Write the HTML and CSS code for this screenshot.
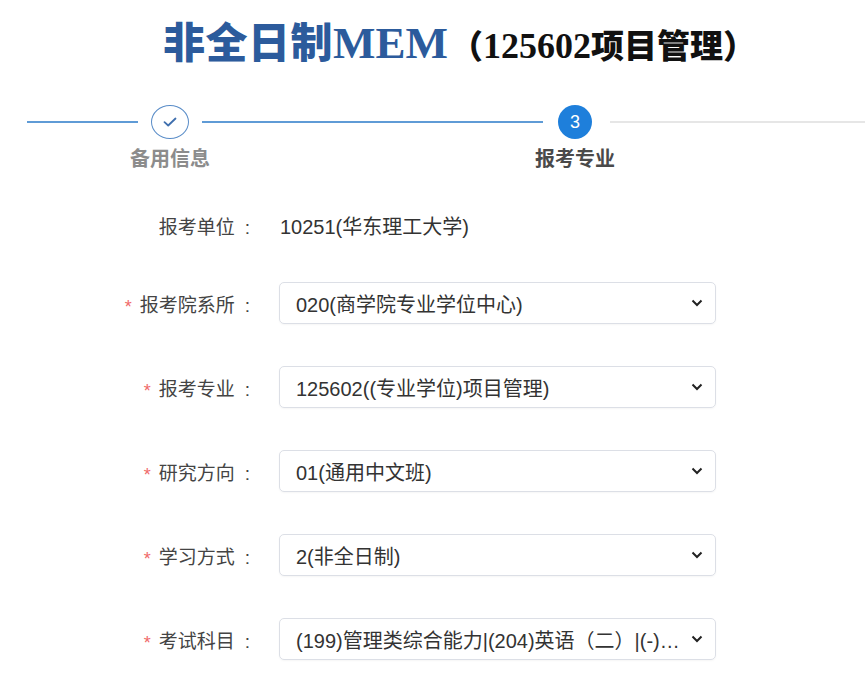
FILE: index.html
```html
<!DOCTYPE html>
<html lang="zh-CN">
<head>
<meta charset="utf-8">
<title>非全日制MEM</title>
<link rel="stylesheet" href="styles.css">
</head>
<body>
<div class="page">
  <h1 class="title"><span class="title-main">非全日制<span class="latin">MEM</span></span><span class="title-sub">（<span class="latin">125602</span>项目管理）</span></h1>

  <div class="steps">
    <div class="line line-first done"></div>
    <div class="step step-done">
      <div class="circle circle-done">
        <svg width="14" height="10" viewBox="0 0 14 10"><path d="M1.5 5.2 L5.2 8.5 L12.5 1.5" fill="none" stroke="#3f6fae" stroke-width="1.8" stroke-linecap="round" stroke-linejoin="round"/></svg>
      </div>
      <div class="step-label">备用信息</div>
    </div>
    <div class="line line-mid done"></div>
    <div class="step step-current">
      <div class="circle circle-active">3</div>
      <div class="step-label label-active">报考专业</div>
    </div>
    <div class="line line-last"></div>
  </div>

  <div class="form">
    <div class="row row-static">
      <div class="label">报考单位<span class="colon">:</span></div>
      <div class="value">10251(华东理工大学)</div>
    </div>
    <div class="row">
      <div class="label"><span class="req">*</span>报考院系所<span class="colon">:</span></div>
      <div class="select"><span class="select-text">020(商学院专业学位中心)</span><svg class="chev" width="12" height="8" viewBox="0 0 12 8"><path d="M1.5 1.5 L6 6 L10.5 1.5" fill="none" stroke="#222" stroke-width="2"/></svg></div>
    </div>
    <div class="row">
      <div class="label"><span class="req">*</span>报考专业<span class="colon">:</span></div>
      <div class="select"><span class="select-text">125602((专业学位)项目管理)</span><svg class="chev" width="12" height="8" viewBox="0 0 12 8"><path d="M1.5 1.5 L6 6 L10.5 1.5" fill="none" stroke="#222" stroke-width="2"/></svg></div>
    </div>
    <div class="row">
      <div class="label"><span class="req">*</span>研究方向<span class="colon">:</span></div>
      <div class="select"><span class="select-text">01(通用中文班)</span><svg class="chev" width="12" height="8" viewBox="0 0 12 8"><path d="M1.5 1.5 L6 6 L10.5 1.5" fill="none" stroke="#222" stroke-width="2"/></svg></div>
    </div>
    <div class="row">
      <div class="label"><span class="req">*</span>学习方式<span class="colon">:</span></div>
      <div class="select"><span class="select-text">2(非全日制)</span><svg class="chev" width="12" height="8" viewBox="0 0 12 8"><path d="M1.5 1.5 L6 6 L10.5 1.5" fill="none" stroke="#222" stroke-width="2"/></svg></div>
    </div>
    <div class="row">
      <div class="label"><span class="req">*</span>考试科目<span class="colon">:</span></div>
      <div class="select"><span class="select-text">(199)管理类综合能力|(204)英语（二）|(-)…</span><svg class="chev" width="12" height="8" viewBox="0 0 12 8"><path d="M1.5 1.5 L6 6 L10.5 1.5" fill="none" stroke="#222" stroke-width="2"/></svg></div>
    </div>
  </div>
</div>
</body>
</html>
```

FILE: styles.css
```css
* { box-sizing: border-box; }
html, body { margin: 0; padding: 0; background: #ffffff; }
body {
  font-family: "Liberation Sans", "Noto Sans CJK SC", sans-serif;
  color: #333;
  width: 865px;
  overflow: hidden;
}
.page { width: 865px; height: 694px; overflow: hidden; }

.title {
  margin: 0;
  padding: 12px 0 0 163px;
  display: flex;
  align-items: baseline;
  white-space: nowrap;
  font-family: "Noto Sans CJK SC", sans-serif;
  font-weight: 900;
  line-height: 56px;
  height: 68px;
}
.title-main {
  color: #2c5b9c;
  font-size: 42px;
  letter-spacing: 0.5px;
}
.title-main .latin {
  font-family: "Liberation Serif", serif;
  font-weight: 700;
  font-size: 45px;
  letter-spacing: 0;
}
.title-sub {
  color: #111;
  font-size: 33px;
  margin-left: 2px;
}
.title-sub .latin {
  font-family: "Liberation Serif", serif;
  font-weight: 700;
  font-size: 36px;
}

.steps {
  display: flex;
  align-items: flex-start;
  padding-left: 27px;
  margin-top: 37px;
  height: 80px;
}
.line {
  height: 2px;
  margin-top: 16px;
  background: #e6e6e6;
}
.line.done { background: #5f9bd6; }
.line-first { width: 111px; margin-right: 13px; }
.line-mid { width: 341px; margin-left: 13px; margin-right: 15px; }
.line-last { flex: 1; margin-left: 18px; }
.step {
  display: flex;
  flex-direction: column;
  align-items: center;
}
.step-done { width: 38px; }
.step-current { width: 34px; }
.circle {
  flex: none;
  display: flex;
  align-items: center;
  justify-content: center;
  border-radius: 50%;
}
.circle-done {
  width: 38px;
  height: 34px;
  border: 1.5px solid #5a8dc8;
  background: #fff;
}
.circle-active {
  width: 34px;
  height: 34px;
  background: #1e7fdb;
  color: #fff;
  font-family: "Liberation Sans", sans-serif;
  font-size: 18px;
}
.step-label {
  margin-top: 6px;
  white-space: nowrap;
  font-family: "Noto Sans CJK SC", sans-serif;
  font-size: 20px;
  font-weight: 700;
  color: #8c8c8c;
  line-height: 26px;
}
.label-active { color: #4a4a4a; }

.form {
  margin-top: 19px;
  display: flex;
  flex-direction: column;
}
.row {
  display: flex;
  align-items: center;
  height: 42px;
  margin-bottom: 42px;
}
.row-static { margin-bottom: 36px; }
.label {
  width: 250px;
  flex: none;
  text-align: right;
  font-family: "Noto Sans CJK SC", sans-serif;
  font-size: 19px;
  color: #444;
  white-space: nowrap;
}
.colon {
  font-family: "Liberation Sans", sans-serif;
  margin-left: 10px;
}
.req {
  color: #f06a6a;
  font-family: "Liberation Sans", sans-serif;
  font-size: 18px;
  margin-right: 8px;
  position: relative;
  top: 1px;
}
.value {
  margin-left: 30px;
  font-size: 20px;
  color: #333;
}
.select {
  margin-left: 29px;
  width: 437px;
  height: 42px;
  border: 1px solid #dcdfe6;
  border-radius: 5px;
  display: flex;
  align-items: center;
  padding: 0 12px 0 16px;
  box-shadow: 0 1px 2px rgba(0,0,0,0.04);
}
.select-text {
  flex: 1;
  min-width: 0;
  overflow: hidden;
  white-space: nowrap;
  text-overflow: ellipsis;
  font-size: 20px;
  color: #333;
}
.chev { flex: none; margin-left: 4px; }
```
